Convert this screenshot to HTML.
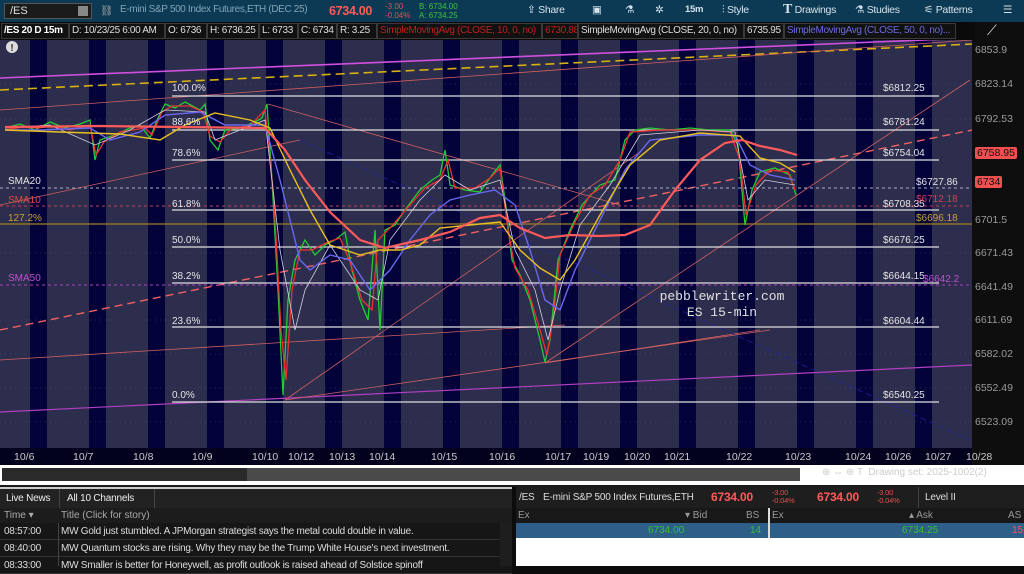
<!DOCTYPE html>
<html><head><meta charset="utf-8"><style>
*{margin:0;padding:0;box-sizing:border-box}
body{width:1024px;height:566px;overflow:hidden;background:#0c0c0c;font-family:"Liberation Sans",sans-serif;position:relative}
.a{position:absolute;white-space:nowrap}
#top{left:0;top:0;width:1024px;height:22px;background:#0c3a55}
#r2{left:0;top:22px;width:1024px;height:18px;background:#0a0a0a}
.bx{position:absolute;top:23px;height:16px;border:1px solid #3a3a3a;font-size:10px;letter-spacing:-0.35px;line-height:14px;padding:0 2px;color:#ddd;background:#111;overflow:hidden}
.tb{position:absolute;top:4px;font-size:10.5px;letter-spacing:-0.3px;color:#d6e2ea}
.ax{position:absolute;left:975px;font-size:10.5px;color:#9a9a9a}
.xl{position:absolute;top:451px;font-size:10.5px;color:#c8c8c8}
.nr{position:absolute;left:0;width:512px;height:17px;font-size:10px;letter-spacing:-0.25px;color:#ddd;line-height:17px;border-bottom:1px solid #333;background:#161616}
</style></head><body>
<div class="a" id="top"></div>
<div class="a" style="left:4px;top:3px;width:88px;height:16px;background:#1b1b1b;border:1px solid #555;color:#ddd;font-size:11px;line-height:14px;padding-left:5px">/ES<span style="position:absolute;right:3px;top:2px;width:10px;height:10px;background:#888"></span></div>
<div class="tb" style="left:100px;color:#aaa">⛓</div>
<div class="tb" style="left:120px;color:#7fa4b8;font-size:10px;letter-spacing:-0.35px">E-mini S&amp;P 500 Index Futures,ETH (DEC 25)</div>
<div class="a" style="left:329px;color:#ff5a5a;font-weight:bold;font-size:12.5px;top:4px;letter-spacing:-0.3px">6734.00</div>
<div class="a" style="left:385px;top:2px;font-size:8px;color:#e05050;line-height:9px">-3.00<br>-0.04%</div>
<div class="a" style="left:419px;top:2px;font-size:8px;color:#3ec23e;line-height:9px">B: 6734.00<br>A: 6734.25</div>
<div class="tb" style="left:527px">⇪ Share</div>
<div class="tb" style="left:592px">▣</div>
<div class="tb" style="left:625px">⚗</div>
<div class="tb" style="left:655px">✲</div>
<div class="tb" style="left:685px;font-weight:bold;font-size:9.5px">15m</div>
<div class="tb" style="left:722px">⫶ Style</div>
<div class="tb" style="left:783px;top:2px"><b style="font-size:14px;font-family:'Liberation Serif'">T</b> Drawings</div>
<div class="tb" style="left:855px">⚗ Studies</div>
<div class="tb" style="left:924px">⚟ Patterns</div>
<div class="tb" style="left:1003px">☰</div>
<div class="a" id="r2"></div>
<div class="bx" style="left:1px;width:68px;font-weight:bold;color:#fff">/ES 20 D 15m</div>
<div class="bx" style="left:69px;width:96px">D: 10/23/25 6:00 AM</div>
<div class="bx" style="left:165px;width:42px">O: 6736</div>
<div class="bx" style="left:207px;width:52px">H: 6736.25</div>
<div class="bx" style="left:259px;width:39px">L: 6733</div>
<div class="bx" style="left:298px;width:39px">C: 6734</div>
<div class="bx" style="left:337px;width:40px">R: 3.25</div>
<div class="bx" style="left:377px;width:165px;color:#c02020">SimpleMovingAvg (CLOSE, 10, 0, no)</div>
<div class="bx" style="left:542px;width:36px;color:#c02020">6730.88</div>
<div class="bx" style="left:578px;width:166px">SimpleMovingAvg (CLOSE, 20, 0, no)</div>
<div class="bx" style="left:744px;width:40px">6735.95</div>
<div class="bx" style="left:784px;width:172px;color:#6a6ae0">SimpleMovingAvg (CLOSE, 50, 0, no)...</div>
<div class="a" style="left:975px;top:22px;width:49px;height:24px;background:#0e0e0e;color:#ddd;font-size:14px;padding-left:12px">⟋</div>

<svg class="a" style="left:0;top:0" width="1024" height="566" viewBox="0 0 1024 566">
<defs><clipPath id="c"><rect x="0" y="40" width="972" height="408"/></clipPath></defs>
<rect x="0" y="40" width="972" height="408" fill="#2d2d4d"/>
<g fill="#03033a" clip-path="url(#c)">
<rect x="30" y="40" width="17" height="408"/><rect x="89" y="40" width="17" height="408"/><rect x="148" y="40" width="17" height="408"/><rect x="207" y="40" width="17" height="408"/><rect x="266" y="40" width="17" height="408"/><rect x="325" y="40" width="17" height="408"/><rect x="384" y="40" width="17" height="408"/><rect x="443" y="40" width="17" height="408"/><rect x="502" y="40" width="17" height="408"/><rect x="561" y="40" width="17" height="408"/><rect x="620" y="40" width="17" height="408"/><rect x="679" y="40" width="17" height="408"/><rect x="738" y="40" width="17" height="408"/><rect x="797" y="40" width="17" height="408"/><rect x="856" y="40" width="17" height="408"/><rect x="915" y="40" width="17" height="408"/>
</g>
<g clip-path="url(#c)" fill="none">
<g stroke="#55557a" stroke-width="0.6" stroke-dasharray="1,4">
<line x1="0" y1="84" x2="972" y2="84"/><line x1="0" y1="119" x2="972" y2="119"/><line x1="0" y1="253" x2="972" y2="253"/><line x1="0" y1="320" x2="972" y2="320"/><line x1="0" y1="354" x2="972" y2="354"/><line x1="0" y1="388" x2="972" y2="388"/><line x1="0" y1="422" x2="972" y2="422"/>
</g>
<line x1="0" y1="78" x2="972" y2="38" stroke="#d050e0" stroke-width="1.6"/>
<line x1="0" y1="90" x2="972" y2="44" stroke="#d8b010" stroke-width="1.6" stroke-dasharray="9,5"/>
<line x1="0" y1="412" x2="972" y2="365" stroke="#b040c0" stroke-width="1.2"/>
<line x1="0" y1="330" x2="972" y2="130" stroke="#f06060" stroke-width="1.4" stroke-dasharray="8,5"/>
<g stroke="#d06060" stroke-width="0.8">
<line x1="0" y1="110" x2="972" y2="40"/>
<line x1="0" y1="205" x2="300" y2="140"/>
<line x1="268" y1="104" x2="620" y2="205"/>
<line x1="285" y1="400" x2="640" y2="152"/>
<line x1="285" y1="400" x2="770" y2="330"/>
<line x1="0" y1="360" x2="565" y2="325"/>
<line x1="545" y1="363" x2="970" y2="80"/>
<line x1="545" y1="363" x2="760" y2="330"/>
</g>
<line x1="300" y1="140" x2="970" y2="440" stroke="#2020a0" stroke-width="0.8" stroke-dasharray="6,4"/>
<g stroke="#e0e0e0" stroke-width="1.2">
<line x1="172" y1="96" x2="939" y2="96"/><line x1="172" y1="130" x2="939" y2="130"/><line x1="172" y1="160" x2="939" y2="160"/><line x1="172" y1="210" x2="939" y2="210"/><line x1="172" y1="247" x2="939" y2="247"/><line x1="172" y1="283" x2="939" y2="283"/><line x1="172" y1="327" x2="939" y2="327"/><line x1="172" y1="402" x2="939" y2="402"/>
</g>
<line x1="0" y1="188" x2="972" y2="188" stroke="#b0b0c8" stroke-width="1" stroke-dasharray="3,3"/>
<line x1="0" y1="206" x2="972" y2="206" stroke="#c04050" stroke-width="1" stroke-dasharray="3,3"/>
<line x1="0" y1="224" x2="972" y2="224" stroke="#a08020" stroke-width="1.3"/>
<line x1="0" y1="285" x2="972" y2="285" stroke="#b040c0" stroke-width="1" stroke-dasharray="3,3"/>
<polyline stroke="#22cc33" stroke-width="1.3" points="5,128 20,124 35,130 50,122 65,128 80,124 90,120 95,160 100,140 115,135 130,128 140,125 150,138 158,118 165,104 175,108 185,102 200,110 205,104 210,140 218,150 225,130 240,128 255,122 262,118 267,104 272,180 278,290 283,395 288,300 295,260 305,240 315,255 325,245 335,240 345,232 352,270 360,300 368,320 375,230 380,330 385,230 395,225 405,210 420,190 432,180 440,175 445,150 450,185 465,190 480,192 492,175 500,165 505,200 512,260 520,275 530,300 540,340 545,362 550,340 558,260 570,230 582,205 600,185 615,180 625,140 635,130 650,128 670,130 690,128 710,130 730,130 738,145 745,225 752,190 760,172 775,168 790,175 796,195"/>
<polyline stroke="#ee3030" stroke-width="1.3" points="5,130 22,127 38,128 52,126 70,130 90,125 96,155 104,142 120,132 145,128 152,135 162,112 172,106 190,106 203,112 210,136 220,142 232,128 250,126 265,110 274,200 281,330 286,380 292,290 300,250 312,250 328,242 340,238 350,262 362,300 372,310 378,240 390,228 410,205 425,188 440,180 448,160 455,188 475,188 490,178 500,168 508,230 515,268 528,290 540,330 547,355 553,320 560,255 575,222 590,195 605,185 620,160 630,132 660,130 700,130 730,132 740,160 746,215 756,185 770,170 788,172 795,190"/>
<polyline stroke="#d0d0e0" stroke-width="0.8" points="5,128 50,125 95,145 130,130 165,110 205,112 215,140 265,120 280,250 295,330 305,290 330,245 360,290 378,300 390,240 420,200 445,175 470,190 500,180 515,250 535,290 548,340 560,290 580,225 610,185 640,135 700,130 735,132 748,200 765,180 795,185"/>
<polyline stroke="#6868f0" stroke-width="1.4" points="5,130 40,130 90,128 110,140 140,132 165,115 200,112 225,125 265,125 280,180 300,260 310,270 330,255 350,260 370,290 390,270 410,240 430,215 450,200 470,195 495,190 515,205 530,250 545,300 560,310 575,270 600,220 625,170 650,140 700,135 735,135 750,165 770,175 795,180"/>
<polyline stroke="#e8c020" stroke-width="1.4" points="5,130 60,132 120,134 160,140 185,125 215,113 250,120 270,128 290,170 310,210 330,245 345,250 360,255 380,250 400,250 420,245 440,228 470,225 500,222 520,250 540,268 560,280 575,260 600,215 630,165 660,140 700,133 740,136 760,158 780,163 795,172"/>
<polyline stroke="#ff5a5a" stroke-width="2.2" points="5,127 100,126 180,127 265,128 285,150 305,180 330,212 360,240 385,248 420,240 450,232 480,218 500,215 520,228 545,238 570,235 600,236 625,235 650,225 675,190 700,160 725,143 742,140 760,146 780,150 797,155"/>
<g font-family="Liberation Sans" font-size="10" fill="#e4e4e4">
<text x="172" y="91">100.0%</text><text x="172" y="125">88.6%</text><text x="172" y="156">78.6%</text><text x="172" y="207">61.8%</text><text x="172" y="243">50.0%</text><text x="172" y="279">38.2%</text><text x="172" y="324">23.6%</text><text x="172" y="398">0.0%</text>
<text x="883" y="91">$6812.25</text><text x="883" y="125">$6781.24</text><text x="883" y="156">$6754.04</text><text x="883" y="207">$6708.35</text><text x="883" y="243">$6676.25</text><text x="883" y="279">$6644.15</text><text x="883" y="324">$6604.44</text><text x="883" y="398">$6540.25</text>
<text x="916" y="185">$6727.86</text>
<text x="916" y="202" fill="#d04050">$6712.18</text>
<text x="916" y="221" fill="#c8a030">$6696.18</text>
<text x="923" y="282" fill="#c050d0">$6642.2</text>
<text x="8" y="184">SMA20</text>
<text x="8" y="203" fill="#e04848">SMA10</text>
<text x="8" y="221" fill="#c8a030">127.2%</text>
<text x="8" y="281" fill="#c050d0">SMA50</text>
</g>
<g font-family="Liberation Mono" font-size="13" fill="#e0e0e0" text-anchor="middle">
<text x="722" y="300">pebblewriter.com</text><text x="722" y="316">ES 15-min</text>
</g>
<circle cx="12" cy="47" r="6" fill="#ddd"/><text x="12" y="51" font-size="10" font-weight="bold" fill="#333" text-anchor="middle">!</text>
</g>
<rect x="972" y="40" width="52" height="408" fill="#0e0e0e"/>
<rect x="0" y="448" width="972" height="17" fill="#02021e"/>
<rect x="972" y="448" width="52" height="17" fill="#0e0e0e"/>
</svg>
<div class="ax" style="top:44px">6853.9</div>
<div class="ax" style="top:78px">6823.14</div>
<div class="ax" style="top:113px">6792.53</div>
<div class="ax" style="top:214px">6701.5</div>
<div class="ax" style="top:247px">6671.43</div>
<div class="ax" style="top:281px">6641.49</div>
<div class="ax" style="top:314px">6611.69</div>
<div class="ax" style="top:348px">6582.02</div>
<div class="ax" style="top:382px">6552.49</div>
<div class="ax" style="top:416px">6523.09</div>
<div class="a" style="left:975px;top:147px;background:#f05050;color:#111;font-size:10.5px;padding:0 2px;border-radius:2px">6758.95</div>
<div class="a" style="left:975px;top:176px;background:#f05050;color:#111;font-size:10.5px;padding:0 2px;border-radius:2px">6734</div>

<div class="xl" style="left:14px">10/6</div><div class="xl" style="left:73px">10/7</div><div class="xl" style="left:133px">10/8</div><div class="xl" style="left:192px">10/9</div><div class="xl" style="left:252px">10/10</div><div class="xl" style="left:288px">10/12</div><div class="xl" style="left:329px">10/13</div><div class="xl" style="left:369px">10/14</div><div class="xl" style="left:431px">10/15</div><div class="xl" style="left:489px">10/16</div><div class="xl" style="left:545px">10/17</div><div class="xl" style="left:583px">10/19</div><div class="xl" style="left:624px">10/20</div><div class="xl" style="left:664px">10/21</div><div class="xl" style="left:726px">10/22</div><div class="xl" style="left:785px">10/23</div><div class="xl" style="left:845px">10/24</div><div class="xl" style="left:885px">10/26</div><div class="xl" style="left:925px">10/27</div><div class="xl" style="left:966px">10/28</div>

<div class="a" style="left:0;top:465px;width:1024px;height:20px;background:#fff"></div>
<div class="a" style="left:2px;top:468px;width:798px;height:13px;background:#4a4a4a"></div>
<div class="a" style="left:2px;top:468px;width:245px;height:13px;background:#2a2a2a"></div>
<div class="a" style="left:822px;top:467px;font-size:10px;color:#ccc">⊕ ⇔ ⊕ T &nbsp;Drawing set: 2025-1002(2)</div>
<div class="a" style="left:0;top:485px;width:1024px;height:3px;background:#1a1a1a"></div>

<div class="a" style="left:0;top:487px;width:520px;height:79px;background:#141414"></div>
<div class="a" style="left:0;top:487px;width:512px;height:2px;background:#ccc"></div>
<div class="a" style="left:0;top:489px;width:60px;height:19px;border-right:1px solid #444;color:#eee;font-size:10px;letter-spacing:-0.2px;line-height:19px;padding-left:6px;background:#222">Live News</div>
<div class="a" style="left:60px;top:489px;width:95px;height:19px;border-right:1px solid #444;color:#eee;font-size:10px;letter-spacing:-0.2px;line-height:19px;padding-left:7px;background:#222">All 10 Channels</div>
<div class="a" style="left:155px;top:489px;width:357px;height:19px;background:#222"></div>
<div class="a" style="left:0;top:508px;width:512px;height:15px;background:#1c1c1c;font-size:10px;color:#aaa;line-height:15px"><span style="position:absolute;left:4px">Time ▾</span><span style="position:absolute;left:61px">Title (Click for story)</span></div>
<div class="nr" style="top:523px"><span style="position:absolute;left:4px">08:57:00</span><span style="position:absolute;left:61px">MW Gold just stumbled. A JPMorgan strategist says the metal could double in value.</span></div>
<div class="nr" style="top:540px"><span style="position:absolute;left:4px">08:40:00</span><span style="position:absolute;left:61px">MW Quantum stocks are rising. Why they may be the Trump White House's next investment.</span></div>
<div class="nr" style="top:557px"><span style="position:absolute;left:4px">08:33:00</span><span style="position:absolute;left:61px">MW Smaller is better for Honeywell, as profit outlook is raised ahead of Solstice spinoff</span></div>
<div class="a" style="left:58px;top:523px;width:1px;height:43px;background:#444"></div>
<div class="a" style="left:500px;top:523px;width:12px;height:43px;background:#1e1e1e"></div>

<div class="a" style="left:512px;top:487px;width:4px;height:79px;background:#0c0c0c"></div>
<div class="a" style="left:516px;top:487px;width:508px;height:79px;background:#fff"></div>
<div class="a" style="left:516px;top:487px;width:508px;height:21px;background:#1e1e1e;font-size:10px;letter-spacing:-0.2px;color:#ddd;line-height:21px">
<span style="position:absolute;left:3px">/ES</span><span style="position:absolute;left:27px">E-mini S&amp;P 500 Index Futures,ETH</span>
<span style="position:absolute;left:195px;color:#ff5a5a;font-weight:bold;font-size:12px">6734.00</span>
<span style="position:absolute;left:256px;top:2px;font-size:7.5px;line-height:8px;color:#e05050">-3.00<br>-0.04%</span>
<span style="position:absolute;left:301px;color:#ff5a5a;font-weight:bold;font-size:12px">6734.00</span>
<span style="position:absolute;left:361px;top:2px;font-size:7.5px;line-height:8px;color:#e05050">-3.00<br>-0.04%</span>
<span style="position:absolute;left:402px;border-left:1px solid #444;padding-left:6px">Level II</span></div>
<div class="a" style="left:516px;top:508px;width:508px;height:15px;background:#181818;font-size:10px;color:#999;line-height:15px">
<span style="position:absolute;left:2px">Ex</span><span style="position:absolute;left:169px">▾ Bid</span><span style="position:absolute;left:230px">BS</span><span style="position:absolute;left:256px">Ex</span><span style="position:absolute;left:393px">▴ Ask</span><span style="position:absolute;left:492px">AS</span></div>
<div class="a" style="left:516px;top:523px;width:508px;height:15px;background:#2e5f88;font-size:10px;line-height:15px">
<span style="position:absolute;left:132px;color:#36c036">6734.00</span><span style="position:absolute;left:234px;color:#36c036">14</span><span style="position:absolute;left:386px;color:#36c036">6734.25</span><span style="position:absolute;left:496px;color:#ff5060">15</span></div>
<div class="a" style="left:768px;top:508px;width:2px;height:30px;background:#ddd"></div>
</body></html>
